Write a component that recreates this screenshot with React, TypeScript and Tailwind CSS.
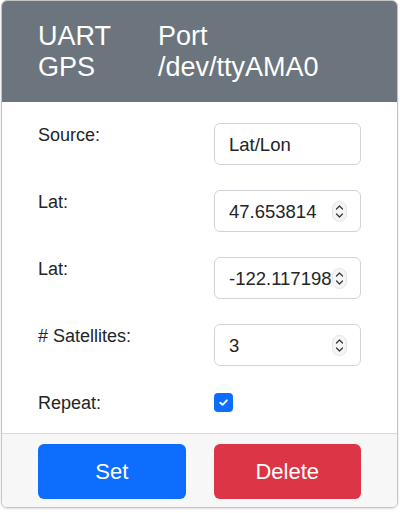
import React from "react";

const Spinner = () => (
  <svg width="15" height="21" viewBox="0 0 15 21" className="shrink-0">
    <rect x="0.5" y="0.5" width="14" height="20" rx="7" fill="#f5f5f5" stroke="#e3e3e3" />
    <path d="M4.5 8 L7.5 5 L10.5 8" fill="none" stroke="#3a3a3a" strokeWidth="1.3" strokeLinecap="round" strokeLinejoin="round" />
    <path d="M4.5 13 L7.5 16 L10.5 13" fill="none" stroke="#3a3a3a" strokeWidth="1.3" strokeLinecap="round" strokeLinejoin="round" />
  </svg>
);

const Field = ({ label, value, number }: { label: string; value: string; number?: boolean }) => (
  <div className="flex items-start">
    <div className="w-[176px] shrink-0 leading-[27px] -mt-[1px]">{label}</div>
    <div className="w-[147px] shrink-0 h-[42px] border border-[#ced4da] rounded-[6px] flex items-center pl-[14px] pr-[13px] bg-white">
      <span className="flex-1 min-w-0 text-[18.5px] leading-[27px] whitespace-nowrap overflow-hidden">{value}</span>
      {number && <Spinner />}
    </div>
  </div>
);

export default function App() {
  return (
    <div className="w-[400px] h-[513px] bg-white pl-[1px] font-['Liberation_Sans',Arial,sans-serif]">
      <div className="w-[397px] h-[508px] border border-[#c4c4c4] rounded-[6px] overflow-hidden flex flex-col shadow-sm">
        <div className="h-[101px] bg-[#6c757d] text-white text-[27px] leading-[31px] flex items-center px-[36px]">
          <div className="w-[120px]">
            <div>UART</div>
            <div>GPS</div>
          </div>
          <div>
            <div>Port</div>
            <div>/dev/ttyAMA0</div>
          </div>
        </div>
        <div className="flex-1 bg-white text-[18px] text-[#212529] px-[36px] pt-[21px] flex flex-col gap-[25px]">
          <Field label="Source:" value="Lat/Lon" />
          <Field label="Lat:" value="47.653814" number />
          <Field label="Lat:" value="-122.117198" number />
          <Field label="# Satellites:" value="3" number />
          <div className="flex items-start">
            <div className="w-[176px] shrink-0 leading-[27px] -mt-[1px]">Repeat:</div>
            <div className="mt-[2px] w-[19px] h-[19px] rounded-[4px] bg-[#0d6efd] flex items-center justify-center">
              <svg width="11" height="11" viewBox="0 0 12 12">
                <path d="M2.5 6.3 L5 8.6 L9.6 3.6" fill="none" stroke="white" strokeWidth="2" strokeLinecap="round" strokeLinejoin="round" />
              </svg>
            </div>
          </div>
        </div>
        <div className="h-[74px] bg-[#f7f7f7] border-t border-[#d9d9d9] flex items-start gap-[28px] px-[36px] pt-[10px]">
          <button className="w-[148px] h-[55px] rounded-[6px] bg-[#0d6efd] text-white text-[22px]">Set</button>
          <button className="w-[148px] h-[55px] rounded-[6px] bg-[#dc3545] text-white text-[22px]">Delete</button>
        </div>
      </div>
    </div>
  );
}
